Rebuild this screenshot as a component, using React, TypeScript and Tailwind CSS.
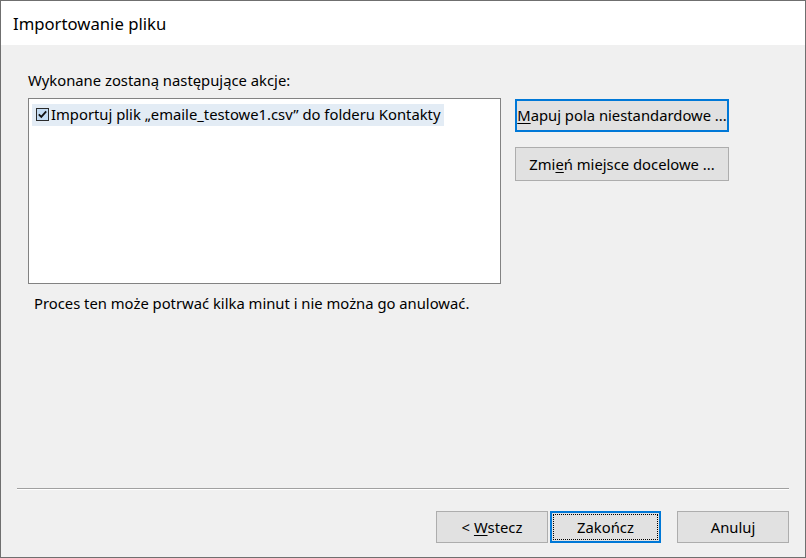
import React from "react";

const font = { fontFamily: '"Noto Sans", "Open Sans", sans-serif' };

export default function App() {
  return (
    <div
      className="w-[806px] h-[558px] flex flex-col border border-[#6f6f6f] bg-[#f0f0f0] text-[#000] overflow-hidden"
      style={font}
    >
      <div className="h-[44px] bg-white flex items-center pl-[12px] pt-[2px] text-[16.7px] shrink-0">
        Importowanie pliku
      </div>
      <div className="flex-1 flex flex-col">
        <div className="pl-[27px] pt-[26px] text-[14.8px] leading-[19px]">
          Wykonane zostaną następujące akcje:
        </div>
        <div className="flex pl-[27px] pt-[8px]">
          <div className="w-[473px] h-[186px] bg-white border border-[#828282] p-[3px]">
            <div className="inline-flex items-center h-[22px] bg-[#e3ecf5] pl-[4px] pr-[4px] text-[14.8px]">
              <span className="w-[13px] h-[13px] border border-[#2b2b2b] bg-[#c4dcf3] flex items-center justify-center mr-[2px] shrink-0">
                <svg width="11" height="11" viewBox="0 0 11 11">
                  <path d="M1.8 5.4 L4.3 7.9 L9.2 2.4" stroke="#111" strokeWidth="1.8" fill="none" />
                </svg>
              </span>
              Importuj plik „emaile_testowe1.csv” do folderu Kontakty
            </div>
          </div>
          <div className="flex flex-col ml-[14px] gap-[15px] pt-[1px]">
            <button className="w-[214px] h-[33px] bg-[#e1e1e1] border-2 border-[#0078d7] text-[14.8px] flex items-center justify-center">
              <span><span className="underline underline-offset-2">M</span>apuj pola niestandardowe ...</span>
            </button>
            <button className="w-[214px] h-[34px] bg-[#e1e1e1] border border-[#adadad] text-[14.8px] flex items-center justify-center">
              <span>Zmi<span className="underline underline-offset-2">e</span>ń miejsce docelowe ...</span>
            </button>
          </div>
        </div>
        <div className="pl-[33px] pt-[9px] text-[14.8px] leading-[20px]">
          Proces ten może potrwać kilka minut i nie można go anulować.
        </div>
        <div className="flex-1" />
        <div className="mx-[16px] border-t border-[#a0a0a0] border-b border-b-white" />
        <div className="flex justify-end pr-[16px] pt-[21px] pb-[14px] text-[14.8px]">
          <button className="w-[112px] h-[32px] bg-[#e1e1e1] border border-[#adadad] flex items-center justify-center">
            <span>&lt; <span className="underline underline-offset-2">W</span>stecz</span>
          </button>
          <button className="ml-[2px] w-[111px] h-[32px] bg-[#e1e1e1] border-2 border-[#0078d7] flex items-center justify-center p-[1px]">
            <span className="w-full h-full border border-dotted border-[#000] flex items-center justify-center">Zakończ</span>
          </button>
          <button className="ml-[16px] w-[112px] h-[32px] bg-[#e1e1e1] border border-[#adadad] flex items-center justify-center">
            Anuluj
          </button>
        </div>
      </div>
    </div>
  );
}
